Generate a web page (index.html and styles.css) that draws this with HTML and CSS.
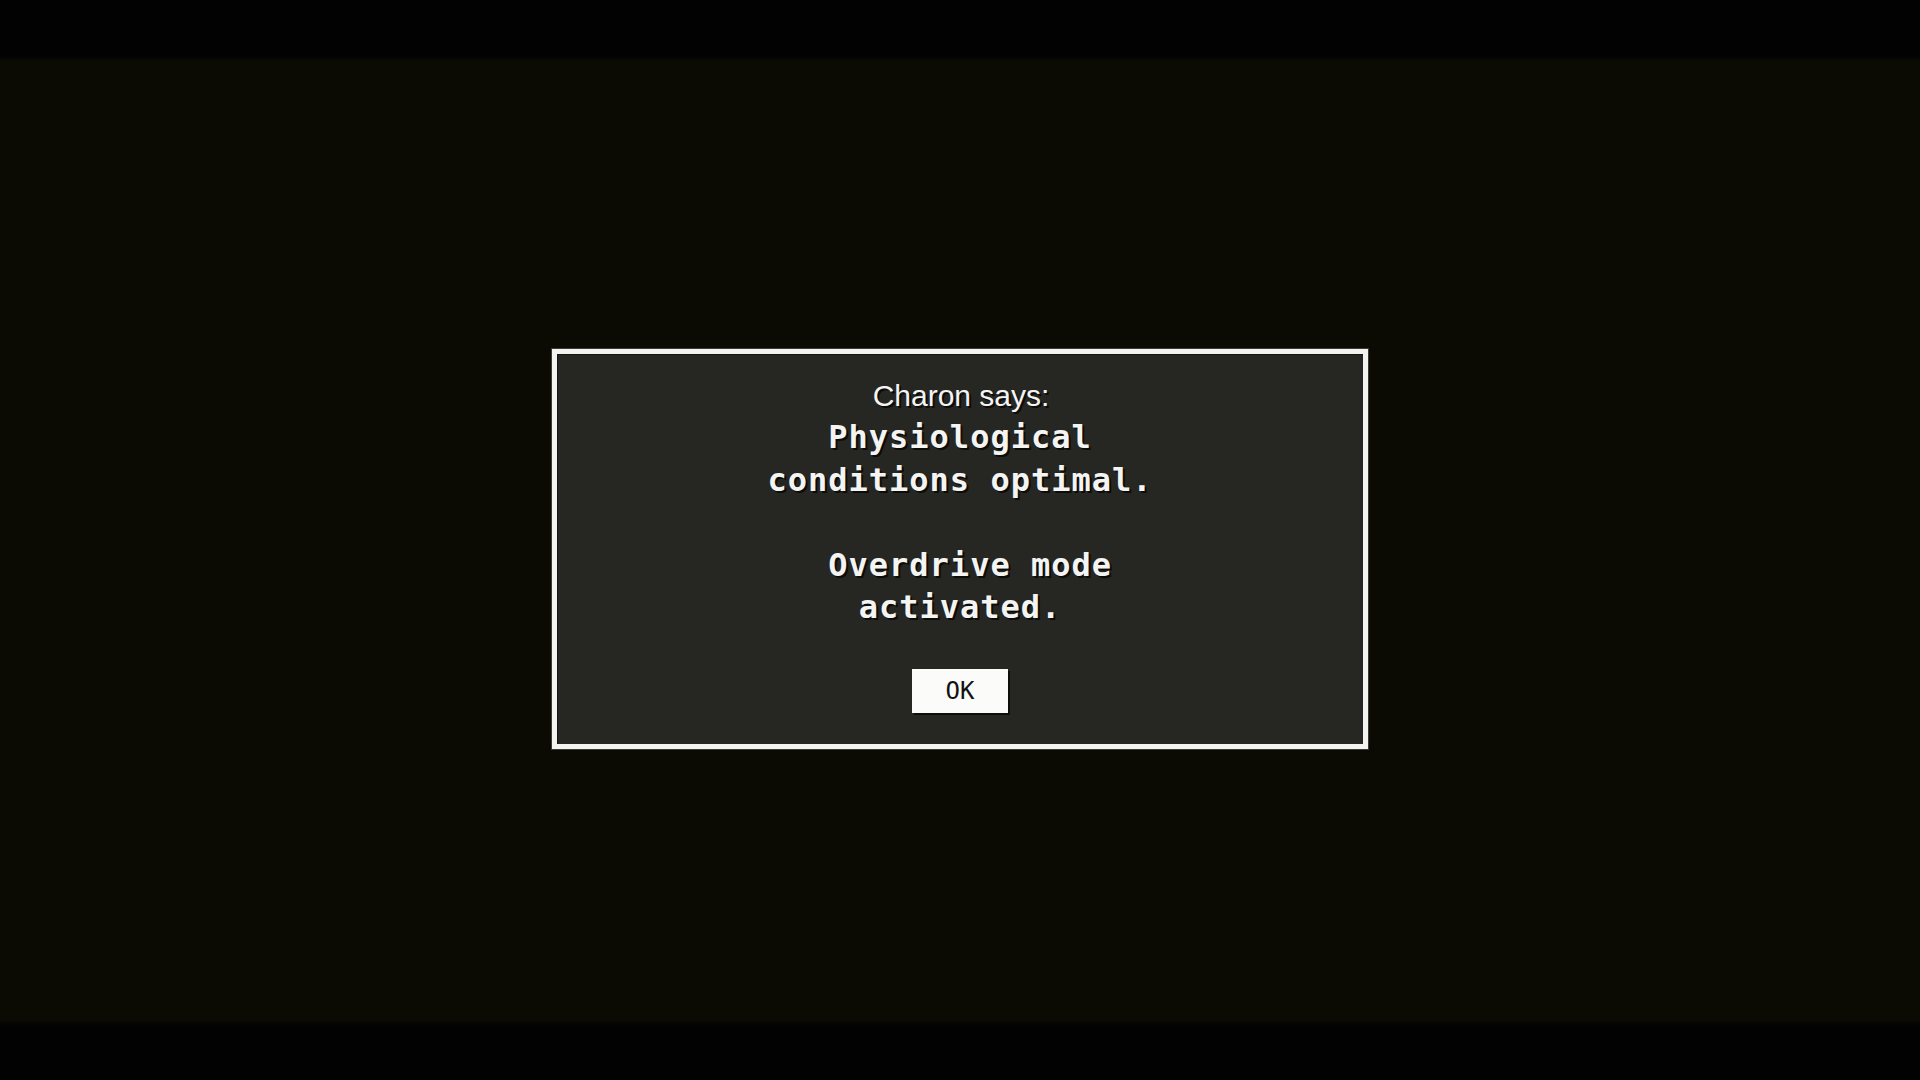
FILE: index.html
```html
<!DOCTYPE html>
<html lang="en">
<head>
<meta charset="utf-8">
<title>Charon says</title>
<link rel="stylesheet" href="styles.css">
</head>
<body>
<div class="screen">
  <div class="band band-top"></div>
  <main class="stage">
    <section class="dialog" role="alertdialog">
      <div class="speaker">Charon says:</div>
      <div class="message">Physiological<br>conditions optimal.<br><br>&nbsp;Overdrive mode<br>activated.</div>
      <button class="ok-btn" type="button">OK</button>
    </section>
  </main>
  <div class="band band-bottom"></div>
</div>
</body>
</html>
```
FILE: styles.css
```css
html, body {
  margin: 0;
  padding: 0;
  width: 1920px;
  height: 1080px;
  overflow: hidden;
  background: #020202;
}

.screen {
  display: flex;
  flex-direction: column;
  width: 1920px;
  height: 1080px;
}

.band {
  background: #020202;
  flex: none;
}

.band-top {
  height: 60px;
  background: linear-gradient(to bottom, #020202 0, #020202 56px, #080804 60px);
}

.band-bottom {
  height: 59px;
  background: linear-gradient(to bottom, #080804 0, #020202 5px, #020202 100%);
}

.stage {
  flex: 1;
  background: #0b0b04;
  display: flex;
  justify-content: center;
  align-items: center;
  padding-top: 17px;
  box-sizing: border-box;
}

.dialog {
  width: 816px;
  height: 400px;
  box-sizing: border-box;
  border: 5px solid #f3f3f1;
  background: #262622;
  box-shadow: inset 1px 1px 0 #141412, 0 0 0 1px #3a3a36;
  display: flex;
  flex-direction: column;
  align-items: center;
  padding: 25px 20px 0;
  text-shadow: 2px 2px 0 #0c0c0a;
  color: #f4f4f2;
}

.speaker {
  font-family: "Liberation Sans", Arial, sans-serif;
  font-size: 30px;
  line-height: 34px;
  margin-left: 2px;
}

.message {
  margin-top: 3px;
  font-family: "DejaVu Sans Mono", "Liberation Mono", monospace;
  font-weight: bold;
  font-size: 32px;
  line-height: 42.5px;
  letter-spacing: 1px;
  text-align: center;
}

.ok-btn {
  margin-top: 40px;
  width: 96px;
  height: 44px;
  padding: 0;
  border: none;
  background: #fbfbfa;
  color: #121212;
  font-family: "DejaVu Sans Mono", "Liberation Mono", monospace;
  font-size: 24px;
  text-shadow: none;
  box-shadow: 2px 2px 0 #0e0e0c;
  cursor: pointer;
}
```
